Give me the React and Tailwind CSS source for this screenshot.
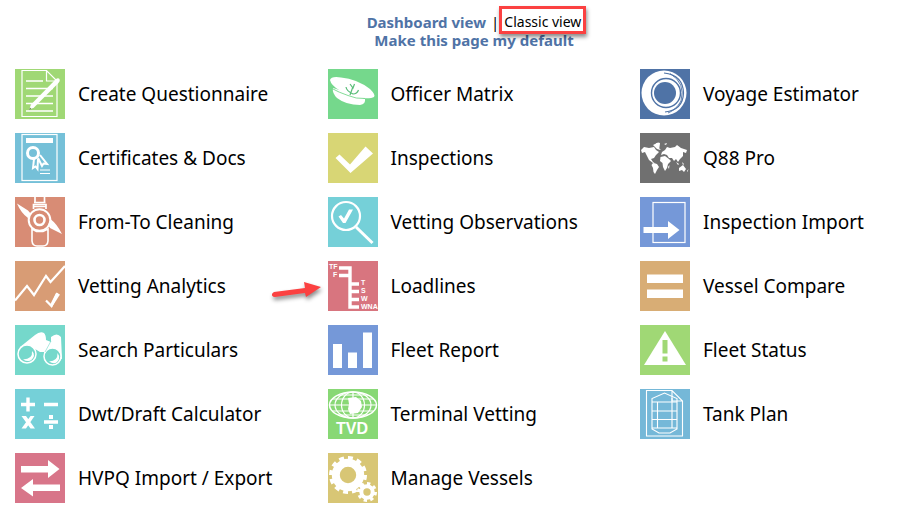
const icons = {
  questionnaire: (
    <>
      <path d="M7 1.5H31.5L42 12V47.5H7ZM31.5 1.5V12H42" fill="none" strokeWidth="1.2" />
      <path d="M11 12H28M11 19.5H38M11 27H38M11 34.5H38M11 42H38" strokeWidth="1.4" />
      <path d="M14 41L16 35.5L40.5 10.5Q43 8.5 44.5 10Q45.5 12 43.5 14L19 38.5Z" stroke="none" />
      <path d="M14 41L15 38.5L16.5 40Z" fill="#66864f" stroke="none" />
    </>
  ),
  certificates: (
    <>
      <rect x="7" y="1.5" width="35" height="46" fill="none" strokeWidth="1.2" />
      <rect x="11" y="5" width="27" height="5" stroke="none" />
      <circle cx="18" cy="20" r="5.5" fill="none" strokeWidth="3" />
      <path d="M19 26L18 35L20.5 33.5L22.5 36L23 26M23 25L27 33L28.5 30.5L32 31L25 22" fill="none" strokeWidth="2" />
      <path d="M25 37H35M25 40.5H35" strokeWidth="1" />
    </>
  ),
  cleaning: (
    <>
      <path d="M2 6.5L13 13.5L16 17L13 21Q6 16 2 6.5ZM47 37L35 31L33 27.5L36 22.5Q42 27 47 37Z" stroke="none" />
      <path d="M20 0V6M29.5 0V6M18.5 12V7.5H31V12M19 5.5H30.5M19 9.5H31" fill="none" strokeWidth="1.7" />
      <circle cx="24.5" cy="23" r="10.8" fill="none" strokeWidth="2" />
      <circle cx="24.5" cy="23" r="5" fill="none" strokeWidth="2.6" />
      <path d="M17 32V44Q17.5 49 22 49H28Q32.5 49 33 44V32L28 34.5H21.5Z" fill="none" strokeWidth="1.6" />
    </>
  ),
  analytics: (
    <>
      <path d="M0 39.5L12 25L19 34L31 15L35.5 21L50 5" fill="none" strokeWidth="2.2" />
      <path d="M31 39.5L36.5 45L42.5 32" fill="none" strokeWidth="2.2" />
      <path d="M35.5 43L41 32L45 33.5L37 46Z" stroke="none" />
    </>
  ),
  search: (
    <>
      <path d="M5 22L20 10Q25 6 29 8Q31 10 31 15L36 17V12Q42 7 46 12L47 34L30 31L29 27H25L20 24L18 35Z" stroke="none" />
      <circle cx="12" cy="29" r="9" fill="#75d8cb" strokeWidth="1.5" />
      <circle cx="37.5" cy="31.5" r="8.5" fill="#75d8cb" strokeWidth="1.5" />
      <path d="M17 26Q18 34 8 34.5Q16 39 19 31Q19.5 28 17 26ZM42.5 28Q43 36 34 36.5Q41 41 44 34Q45 31 42.5 28Z" stroke="none" />
      <path d="M30 27L36 16" stroke="#75d8cb" strokeWidth="0.6" />
    </>
  ),
  calculator: (
    <>
      <path d="M6 15.5H20M13 8.5V22.5M29 15.5H43M29 33H43" strokeWidth="3.4" />
      <path d="M6.5 27H11L20 39.5H15.5ZM15.5 27H19.5L11 39.5H6.5Z" stroke="none" />
      <path d="M34 26H38V30H34ZM34 36H38V40H34Z" stroke="none" />
    </>
  ),
  transfer: (
    <path d="M6 13H33V7L44.5 16L33 25V19.5H6ZM45 31.5H18V26L6 35L18 43.5V38H45Z" stroke="none" />
  ),
  officer: (
    <>
      <path d="M5 19Q4 24 9 29Q18 36 32 36Q38 35 37 30L24 25Z" stroke="none" />
      <path d="M2 11Q3 7 13 8.5Q29 10 42 20Q48 26 46 28Q43 30 32 29Q20 30 11 21Q3 16 2 11Z" stroke="none" />
      <path d="M5 20Q10 23 20 26.5Q28 30 37 29.5" fill="none" stroke="#75d88c" strokeWidth="0.9" />
      <path d="M22 15L25 19L26.5 15M18 18Q18.5 22 25 25Q29 25 30.5 21M24.5 19L22 26" fill="none" stroke="#59bd78" strokeWidth="1.2" />
    </>
  ),
  check: <path d="M7.5 25L11.5 21.5L22 31.5L37.5 13.5L45 20.5L22.5 40Z" stroke="none" />,
  observations: (
    <>
      <circle cx="18" cy="19" r="14" fill="none" strokeWidth="2.2" />
      <path d="M28 30L44.5 46" strokeWidth="3" />
      <path d="M10.5 19.5L13 18L16 21.5L21 12.5H25L17.5 26H15Z" stroke="none" />
    </>
  ),
  loadlines: (
    <>
      <path d="M11 7H22V46H31M11 14.5H22M22 23H31M22 30.5H31M22 38.5H31" fill="none" strokeWidth="3.4" />
      <g stroke="none" fontFamily="Liberation Sans, sans-serif" fontSize="7" fontWeight="bold">
        <text x="1" y="8">TF</text>
        <text x="5" y="16">F</text>
        <text x="33" y="24">T</text>
        <text x="33" y="32">S</text>
        <text x="33" y="40">W</text>
        <text x="33" y="48">WNA</text>
      </g>
    </>
  ),
  report: <path d="M5 19H14V43H5ZM20 27.5H29V43H20ZM35 7.5H44V43H35Z" stroke="none" />,
  terminal: (
    <>
      <ellipse cx="25" cy="16" rx="23.5" ry="13" fill="none" strokeWidth="1.5" />
      <ellipse cx="25" cy="16" rx="18" ry="13" fill="none" strokeWidth="1.2" />
      <ellipse cx="25" cy="16" rx="11.5" ry="13" fill="none" strokeWidth="1.2" />
      <path d="M1.5 16H48.5M4 10H46M4 22H46M10 6H40M10 26H40M25 3V29" strokeWidth="1.2" />
      <path d="M20 9L28 8L33 12L34 18L30 24L22 25L20 20L21 15Z" stroke="none" />
      <text x="24" y="45" textAnchor="middle" stroke="none" fontFamily="Liberation Sans, sans-serif" fontSize="16" fontWeight="bold">TVD</text>
    </>
  ),
  gears: (
    <>
      <circle cx="20" cy="22" r="12.2" fill="none" strokeWidth="8" />
      <circle cx="20" cy="22" r="17" fill="none" strokeWidth="4" pathLength="24" strokeDasharray="1.1 0.9" />
      <circle cx="39" cy="39" r="5.7" fill="none" strokeWidth="4" />
      <circle cx="39" cy="39" r="8.5" fill="none" strokeWidth="3" pathLength="16" strokeDasharray="1 1" />
    </>
  ),
  voyage: (
    <>
      <circle cx="24" cy="24" r="22.5" stroke="none" />
      <g fill="none" stroke="#4f73a6">
        <path d="M24 4Q43 6 43.5 24Q43 41 25 43" strokeWidth="1.2" />
        <path d="M30 4.5Q46 14 41 32Q36 41 28 44" strokeWidth="0.9" />
        <circle cx="26" cy="24" r="14.5" strokeWidth="1.4" />
      </g>
      <circle cx="25" cy="24" r="11" fill="#4f73a6" stroke="none" />
    </>
  ),
  world: (
    <g stroke="none">
      <path d="M1 17L4 14L9 15L14 14L16 17L19 19L16 22L14 25L11 26L13 29L16 31L13 30L9 27L7 23L5 19L2 20Z" />
      <path d="M13 12L18 9.5L20 10L18 14L21 17L17 16ZM16 10L20 10.5L19 17L17.5 14Z" />
      <path d="M13 30L17 31L19 34L17 37L15 41L13.5 39L13 35L11.5 32Z" />
      <path d="M21 22L22 19L25 17L27 14L30 15L35 14L37 12L41 15L47 17L46 20L43 19L43 23L40 26L38 29L36 26L34 28L32 25L29 25L27 22L24 21Z" />
      <path d="M20.5 24L25 23L29 26L31 28L28 31L27 35L25 38L23 34L22.5 30L20 28Z" />
      <path d="M39 35L43 32L46 36L44 39L42 37L39 38ZM36 29L39 31L38 32ZM42 29L44 31L43 32ZM24 11L27 10L26 12ZM47 38L48.5 36L47.5 39ZM28 34L29.5 32L29 36Z" />
    </g>
  ),
  import: (
    <>
      <rect x="13" y="5.5" width="32" height="40" fill="none" strokeWidth="1.2" />
      <path d="M3.5 30H28V24L39.5 33L28 42V36H3.5Z" stroke="none" />
    </>
  ),
  compare: <path d="M7 13.5H43V22H7ZM7 28.5H43V37H7Z" stroke="none" />,
  status: (
    <>
      <path d="M25 6L46 40H4Z" stroke="none" />
      <path d="M22.5 15H27.5V28.5H22.5ZM22.5 31.5H27.5V36.5H22.5Z" fill="#a0d875" stroke="none" />
    </>
  ),
  tank: (
    <g fill="none" strokeWidth="1.1">
      <path d="M6.5 1.5H32L42.5 12V47H6.5ZM32 1.5V12H42.5" />
      <path d="M12 13V9.5L24.5 4L37 9.5V40L30 44H19L12 40ZM12 13H37M12 22H37M12 30.5H37M12 39H37M17.5 13V39M32 9V39" />
    </g>
  ),
};

const columns = [
  [
    { label: "Create Questionnaire", icon: "questionnaire", bg: "bg-[#a0d875]" },
    { label: "Certificates & Docs", icon: "certificates", bg: "bg-[#75c0d8]" },
    { label: "From-To Cleaning", icon: "cleaning", bg: "bg-[#d88c75]" },
    { label: "Vetting Analytics", icon: "analytics", bg: "bg-[#d89c75]" },
    { label: "Search Particulars", icon: "search", bg: "bg-[#75d8cb]" },
    { label: "Dwt/Draft Calculator", icon: "calculator", bg: "bg-[#75d0d8]" },
    { label: "HVPQ Import / Export", icon: "transfer", bg: "bg-[#d87589]" },
  ],
  [
    { label: "Officer Matrix", icon: "officer", bg: "bg-[#75d88c]" },
    { label: "Inspections", icon: "check", bg: "bg-[#d8d675]" },
    { label: "Vetting Observations", icon: "observations", bg: "bg-[#75d0d8]" },
    { label: "Loadlines", icon: "loadlines", bg: "bg-[#d8757f]", pointed: true },
    { label: "Fleet Report", icon: "report", bg: "bg-[#7598d8]" },
    { label: "Terminal Vetting", icon: "terminal", bg: "bg-[#88d875]" },
    { label: "Manage Vessels", icon: "gears", bg: "bg-[#d8c675]" },
  ],
  [
    { label: "Voyage Estimator", icon: "voyage", bg: "bg-[#4f73a6]" },
    { label: "Q88 Pro", icon: "world", bg: "bg-[#707070]" },
    { label: "Inspection Import", icon: "import", bg: "bg-[#7598d8]" },
    { label: "Vessel Compare", icon: "compare", bg: "bg-[#d8ad75]" },
    { label: "Fleet Status", icon: "status", bg: "bg-[#a0d875]" },
    { label: "Tank Plan", icon: "tank", bg: "bg-[#75b8d8]" },
  ],
];

function Arrow() {
  return (
    <svg
      width="56"
      height="28"
      viewBox="0 0 56 28"
      className="absolute right-full top-[14px] drop-shadow-[1px_3px_2px_rgba(0,0,0,0.45)]"
    >
      <path d="M2 17Q-1 19 0 20.5Q1 22 3 22L33 18L34 22L49 12L32 7L33 13Z" fill="#fb4141" />
    </svg>
  );
}

function Tile({ label, icon, bg, pointed }) {
  return (
    <a href="#" className="relative flex items-center gap-[13px] whitespace-nowrap text-[19px] text-black">
      {pointed && <Arrow />}
      <span className={`size-[50px] shrink-0 ${bg}`}>
        <svg viewBox="0 0 50 50" className="size-full" fill="white" stroke="white" aria-hidden="true">
          {icons[icon]}
        </svg>
      </span>
      {label}
    </a>
  );
}

export default function App() {
  return (
    <div className="min-h-screen overflow-x-hidden bg-white pb-6 font-['Noto_Sans','DejaVu_Sans',sans-serif]">

      {/* View switch */}
      <header className="flex flex-col items-center pl-[47px] pt-[13px] text-[15px] leading-[18px]">
        <div className="flex items-center">
          <a href="#" className="font-bold text-[#4f73a6]">Dashboard view</a>
          <span className="px-[5px]">|</span>
          <span className="relative text-[14px]">
            Classic view
            <span className="absolute -inset-x-[5px] -bottom-[3px] -top-[7px] border-3 border-[#fb4141] shadow-[1px_3px_4px_rgba(0,0,0,0.45)]" />
          </span>
        </div>
        <a href="#" className="font-bold text-[#4f73a6]">Make this page my default</a>
      </header>

      {/* Shortcuts */}
      <main className="grid grid-cols-[1fr_1fr_261px] pl-[15px] pt-[20px]">
        {columns.map((tiles) => (
          <div key={tiles[0].label} className="flex flex-col gap-[14px]">
            {tiles.map((tile) => (
              <Tile key={tile.label} {...tile} />
            ))}
          </div>
        ))}
      </main>

    </div>
  );
}
